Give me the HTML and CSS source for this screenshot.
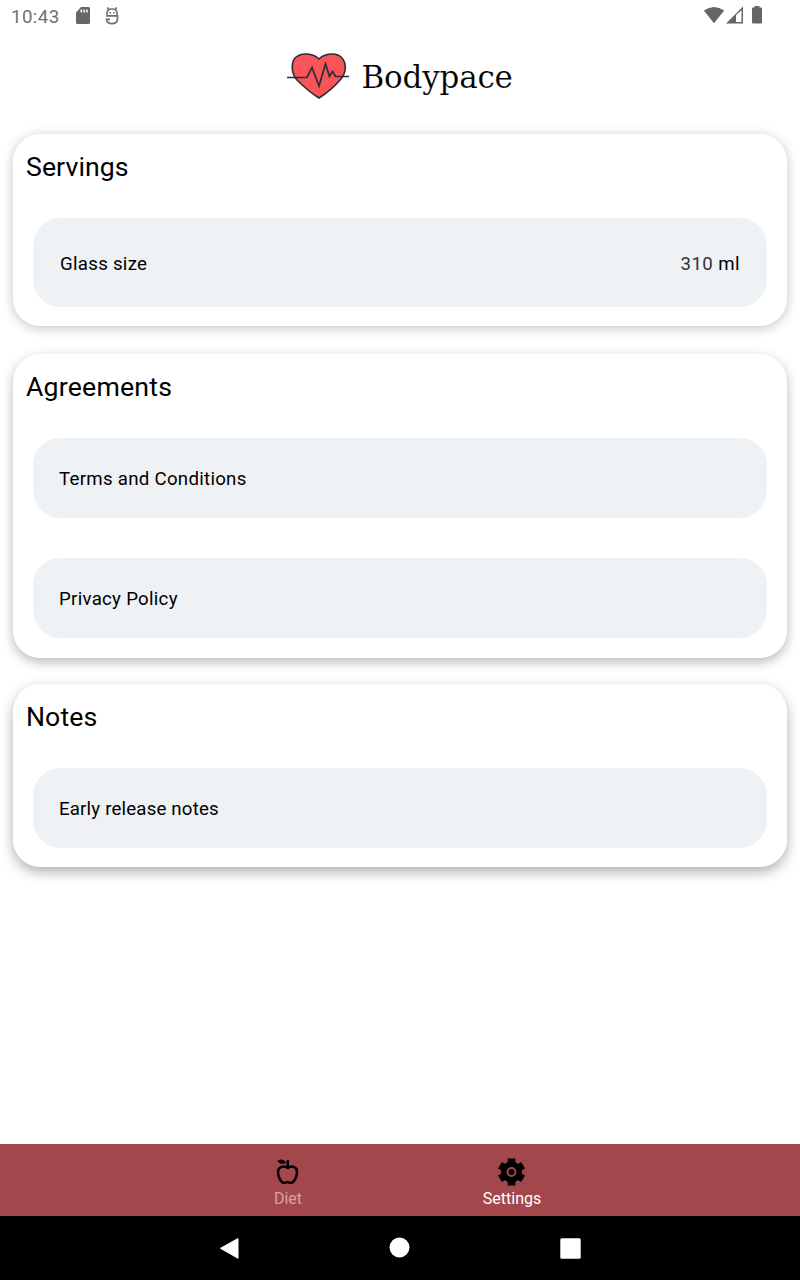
FILE: index.html
```html
<!DOCTYPE html>
<html lang="en">
<head>
<meta charset="utf-8">
<title>Bodypace</title>
<link rel="stylesheet" href="styles.css">
</head>
<body>
<div class="screen">
  <header class="status">
    <span class="clock">10:43</span>
    <svg class="sd" width="16" height="18" viewBox="0 0 16 18"><path fill="#666" fill-rule="evenodd" d="M6 0h7.500Q15 0 15 1.500v14Q15 17 13.500 17h-11Q1 17 1 15.500V5.500zM5.600 2.500v3h1.500v-3zM8.400 2.500v3h1.500v-3zM11.200 2.500v3h1.500v-3z"/></svg>
    <svg class="debug" width="14" height="18" viewBox="0 0 14 18" fill="none" stroke="#707070" stroke-width="1.700"><path d="M2.200 .5L3.500 2M11.800 .5L10.500 2M2 7.800V6Q2 2 7 2T12 6V7.800M1.200 8.800H12.500V12.300Q12 16.600 7 16.600T1.500 12.300H5"/><path stroke-width="1.500" d="M4.500 5.800h1.500M8 5.800h1.500"/></svg>
    <span class="grow"></span>
    <svg width="64" height="20" viewBox="702 5 64 20"><path fill="#666" d="M703.800 10.500Q714 3.300 724.200 10.500L714 23.300z"/><path fill="#666" fill-rule="evenodd" d="M743 6.500V23.500H726zM736 15v7h5.500V10.300z"/><path fill="#666" d="M754.500 6h5v1.500h1.500q1 0 1 1v14q0 1-1 1h-8q-1 0-1-1v-14q0-1 1-1h1.500z"/></svg>
  </header>
  <div class="brand">
    <svg width="64" height="50" viewBox="286 51 64 50" fill="none" stroke="#2b2d36"><path fill="#f95558" stroke-width="1.600" d="M319 98C311 93 304 87 297 80C291 73 291 63 295 58C301 52 313 53 319 59C325 53 337 52 342 58C347 64 346 73 341 79C335 86 327 93 319 98z"/><path stroke-width="1.700" d="M287 77.500H307L312 67.500L319 86L325.500 64L329.500 76.500L332.500 71.500L335.500 76.500H349"/></svg>
    <span class="name">Bodypace</span>
  </div>
  <main class="cards">
    <section class="card servings">
      <h2>Servings</h2>
      <div class="row tall"><span>Glass size</span><span class="value"><span class="num">310</span> ml</span></div>
    </section>
    <section class="card agreements">
      <h2 class="wide">Agreements</h2>
      <div class="row">Terms and Conditions</div>
      <div class="row">Privacy Policy</div>
    </section>
    <section class="card notes">
      <h2>Notes</h2>
      <div class="row snug">Early release notes</div>
    </section>
  </main>
  <nav class="tabs">
    <div class="tab">
      <svg width="28" height="28" viewBox="274 1158 28 28"><path fill="none" stroke="#000" stroke-width="2.500" stroke-linejoin="round" d="M287.700 1168C284 1165.300 278 1166.500 278 1172C278 1177 281 1183 284.500 1183C286 1183 286.500 1182 287.500 1182S289 1183 290.500 1183C294 1183 297 1177 297 1172C297 1166.500 291.500 1165.300 287.700 1168zV1160"/><path d="M277.500 1160.700Q283 1157.500 286 1163Q280 1165.500 277.500 1160.700z"/></svg>
      <span>Diet</span>
    </div>
    <div class="tab active">
      <svg width="28" height="28" viewBox="-13.500 -14 28 28"><g stroke="#000" stroke-width="7.600" stroke-linejoin="round"><path d="M0-13.600V13.600M-11.600-6.700L11.600 6.700M-11.600 6.700L11.600-6.700"/></g><circle r="10.500"/><circle r="4" fill="none" stroke="#a4474c" stroke-width="1.900"/></svg>
      <span>Settings</span>
    </div>
  </nav>
  <footer class="system">
    <svg width="400" height="64" viewBox="200 1216 400 64" fill="#fff"><path stroke="#fff" stroke-linejoin="round" d="M220.500 1248.300L238 1238.500V1258.300z"/><circle cx="399.500" cy="1247.500" r="10"/><rect x="560.300" y="1238.300" width="20.400" height="20.400" rx="1.500"/></svg>
  </footer>
</div>
</body>
</html>
```
FILE: styles.css
```css
* { box-sizing: border-box; }
body { margin: 0; background: #fff; color: #000; font-family: Roboto, sans-serif; }
svg { display: block; flex: none; }
.screen { width: 800px; height: 1280px; display: flex; flex-direction: column; overflow: hidden; }
.status { height: 32px; padding: 0 34px 0 11px; display: flex; align-items: center; }
.clock { width: 64px; padding-top: 2px; color: #707070; font-size: 18.67px; letter-spacing: .45px; }
.debug { margin-left: 14px; }
.grow { flex: 1; }
.status svg:last-child { margin-bottom: 2px; }
.brand { height: 88px; padding-right: 2px; display: flex; justify-content: center; align-items: center; gap: 12px; }
.name { width: 151px; padding-top: 2px; font: 31px/40px "DejaVu Serif", serif; letter-spacing: -.2px; -webkit-text-stroke: .15px #fff; }
.cards { flex: 1; padding: 14px 13px; }
.card { border-radius: 27px; padding: 0 20px 20px; background: #fff; }
.servings { height: 192px; margin-bottom: 28px; box-shadow: 0 2px 12px rgba(0, 0, 0, .24); }
.agreements { height: 304px; margin-bottom: 26px; box-shadow: 0 4px 12px rgba(0, 0, 0, .28); }
.notes { height: 183px; box-shadow: 0 5px 13px rgba(0, 0, 0, .31); }
h2 { height: 84px; margin: 0 -7px; padding-top: 13px; font-size: 26.67px; font-weight: 400; line-height: 40px; letter-spacing: .08px; }
.wide { letter-spacing: .2px; }
.row { height: 80px; border-radius: 27px; background: #eef2f5; padding: 2px 26px 0; display: flex; align-items: center; font-size: 18.67px; letter-spacing: .28px; }
.row + .row { margin-top: 40px; }
.snug { letter-spacing: .18px; }
.tall { height: 89px; padding: 2px 27px 0; justify-content: space-between; }
.value { letter-spacing: .42px; }
.num { color: #333; }
.tabs { height: 72px; padding-left: 176px; background: #a4474c; display: flex; flex: none; }
.tab { width: 224px; padding-top: 14px; display: flex; flex-direction: column; align-items: center; font-size: 16px; line-height: 26px; color: #d4a2a5; }
.active { color: #fff; }
.system { height: 64px; background: #000; display: flex; justify-content: center; flex: none; }
```
